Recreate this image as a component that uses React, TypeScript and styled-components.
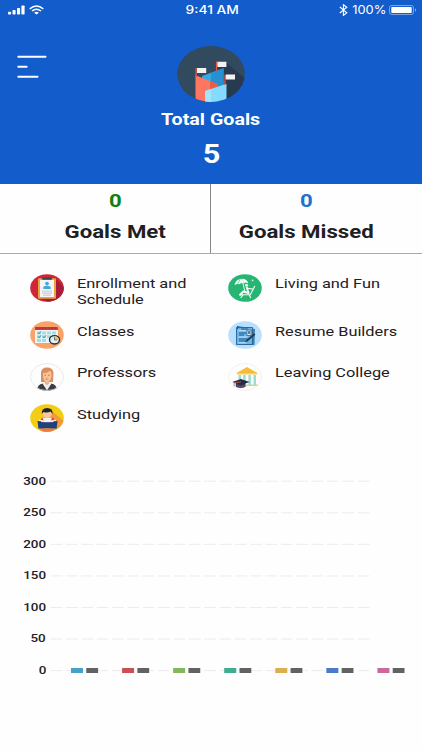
import React from "react";
import styled, { createGlobalStyle } from "styled-components";

const Global = createGlobalStyle`
  * { box-sizing: border-box; }
  html, body { margin: 0; background: #fefefe; }
  body { font-family: Roboto, "Liberation Sans", sans-serif; color: #1f2023; }
  svg { display: block; flex: none; }
`;

const Screen = styled.div`
  width: 422px;
  height: 750px;
  overflow: hidden;
  background: #fefefe;
  display: flex;
  flex-direction: column;
`;

/* Wide lettering: glyphs are stretched horizontally from the given edge. */
const Wide = styled.span<{ $size: number; $weight?: number; $stretch?: number; $origin?: string; $color?: string; $line?: number }>`
  display: block;
  white-space: pre;
  font-size: ${(p) => p.$size}px;
  font-weight: ${(p) => p.$weight ?? 400};
  line-height: ${(p) => (p.$line ? `${p.$line}px` : "1.2")};
  color: ${(p) => p.$color ?? "inherit"};
  transform: scaleX(${(p) => p.$stretch ?? 1.2});
  transform-origin: ${(p) => p.$origin ?? "center"} center;
`;

const Header = styled.header`
  height: 184px;
  flex: none;
  background: #135ccb;
  color: #fff;
`;

const StatusBar = styled.div`
  height: 20px;
  display: grid;
  grid-template-columns: 1fr auto 1fr;
  align-items: center;
  padding: 0 5px 0 8px;
`;

const StatusText = styled(Wide)`
  font-family: Inter, Roboto, sans-serif;
  padding-top: 2px;
`;

const StatusSide = styled.div<{ $end?: boolean }>`
  display: flex;
  align-items: center;
  justify-content: ${(p) => (p.$end ? "flex-end" : "flex-start")};
  gap: 4px;
`;

const HeaderBody = styled.div`
  display: grid;
  grid-template-columns: 62px 1fr 62px;
  padding-top: 26px;
`;

const MenuButton = styled.button`
  border: 0;
  background: none;
  padding: 9px 0 0 17px;
  align-self: start;
`;

const Total = styled.div`
  display: flex;
  flex-direction: column;
  align-items: center;
`;

const TotalLabel = styled(Wide)`
  margin-top: 8px;
`;

const TotalValue = styled(Wide)`
  margin-top: 8px;
`;

const Stats = styled.section`
  height: 70px;
  flex: none;
  display: flex;
  border-bottom: 1px solid #aaa;
`;

const Stat = styled.div<{ $width: number; $left?: number; $right?: number }>`
  width: ${(p) => p.$width}px;
  padding: 6px ${(p) => p.$right ?? 0}px 0 ${(p) => p.$left ?? 0}px;
  display: flex;
  flex-direction: column;
  align-items: center;
  gap: 7px;
  & + & { border-left: 1px solid #858585; }
`;

const Categories = styled.section`
  flex: none;
  display: grid;
  grid-template-columns: 198px 1fr;
  grid-template-rows: 34px 28px 28px 28px;
  row-gap: 13.5px;
  padding: 19.5px 0 0 29.5px;
`;

const Category = styled.div`
  display: flex;
  align-items: flex-start;
  gap: 13.5px;
`;

const CategoryName = styled(Wide)`
  margin-top: 1.5px;
`;

const ChartArea = styled.section`
  display: flex;
  flex: none;
  margin-top: 39.5px;
`;

const Axis = styled.div`
  width: 46px;
  display: flex;
  flex-direction: column;
  align-items: flex-end;
  gap: 17.57px;
  padding-top: 3px;
`;

const Medal = ({ bg, ring, children }: { bg: string; ring?: string; children: React.ReactNode }) => {
  const id = React.useId();
  return (
    <svg width="34" height="28" viewBox="0 0 34 28">
      <defs>
        <clipPath id={id}><ellipse cx="17" cy="14" rx="16.8" ry="13.8" /></clipPath>
      </defs>
      <g clipPath={`url(#${id})`}>
        <rect width="34" height="28" fill={bg} />
        {children}
      </g>
      {ring && <ellipse cx="17" cy="14" rx="16.5" ry="13.5" fill="none" stroke={ring} strokeWidth=".7" />}
    </svg>
  );
};

const EnrollmentIcon = () => (
  <Medal bg="#cf2637">
    <path d="M25 4 34 13v15H18l-8-4z" fill="#a91c36" />
    <rect x="8" y="4.3" width="18" height="20.5" rx="1" fill="#eda33b" />
    <rect x="10" y="6" width="14" height="17" fill="#f4f6fa" />
    <rect x="12" y="3.6" width="10" height="2.2" rx="1" fill="#46424f" />
    <circle cx="17" cy="9.6" r="1.9" fill="#45a8d6" />
    <path d="M13.3 15v-1.5q0-1.7 3.7-1.7t3.7 1.7V15z" fill="#45a8d6" />
    <path d="M12 17.2h10M12 19.2h10M13 21.2h8" stroke="#b5bcc9" strokeWidth=".8" />
  </Medal>
);

const ClassesIcon = () => (
  <Medal bg="#fba268">
    <rect x="5" y="6.5" width="23" height="15.5" fill="#f0f7f7" />
    <rect x="5" y="6" width="23" height="3" fill="#d43c40" />
    <path d="M7 6v2M10 6v2M13 6v2M16 6v2M19 6v2M22 6v2M25 6v2" stroke="#8d292f" strokeWidth=".8" />
    <g fill="#a7dbe0">
      <rect x="7" y="10.5" width="4" height="3" /><rect x="12" y="10.5" width="4" height="3" /><rect x="17" y="10.5" width="4" height="3" /><rect x="22" y="10.5" width="4" height="3" />
      <rect x="7" y="14.3" width="4" height="3" /><rect x="12" y="14.3" width="4" height="3" /><rect x="17" y="14.3" width="4" height="3" />
      <rect x="7" y="18" width="4" height="3" /><rect x="12" y="18" width="4" height="3" />
    </g>
    <path d="m8 11.5 1 1.3 2-2.5M13 15.5l1 1.3 2-2.5M8 15.5l1 1.3 2-2.5" fill="none" stroke="#267d91" strokeWidth=".8" />
    <ellipse cx="24.5" cy="18.8" rx="5" ry="4.2" fill="#e1eff7" stroke="#272b3f" strokeWidth="1.4" />
    <path d="M24.5 18.8V15.3a4 3.5 0 0 1 4 3.5z" fill="#e6cf58" />
    <path d="M24.5 16v3h2.7" fill="none" stroke="#272b3f" strokeWidth=".6" />
  </Medal>
);

const ProfessorsIcon = () => (
  <Medal bg="#fdfdfd" ring="#e2e2e6">
    <path d="M11 19V10q0-5.5 6-5.5T23.5 10l-.5 9z" fill="#d98f5b" />
    <path d="M7 28q0-7 6-7.5h8q6 .5 6 7.5z" fill="#3a3c42" />
    <path d="m12.5 20.5 4.5 7 4.5-7-2-1h-5z" fill="#edf0f2" />
    <path d="M15 17h4v3.5l-2 1.7-2-1.7z" fill="#eeb285" />
    <path d="M13 10q5 0 7-2.5 1.5 1.5 1.5 5 0 5.5-4.5 6.5-4-1-4-6z" fill="#f8c39b" />
    <path d="M14.8 12.2h1M18.5 12.2h1" stroke="#65422e" strokeWidth=".8" />
    <path d="M15.7 16h2.6" stroke="#d0534d" strokeWidth=".7" />
  </Medal>
);

const StudyingIcon = () => (
  <Medal bg="#f2cc15">
    <path d="m23 8 12 10v12H11l-2-6z" fill="#f29a3a" />
    <path d="M10 19q0-5 4-6h7q4.5 1 4.5 6z" fill="#df4545" />
    <path d="M12.5 13.5h9.5l-1.5 4h-6.5z" fill="#f7f1e6" />
    <ellipse cx="17.3" cy="10" rx="4.4" ry="4" fill="#f9c8a1" />
    <path d="M11.8 10q-.5-6 5.3-6 6.2 0 5.4 6l-2-2.4q-3 1.6-7.2.4z" fill="#25222b" />
    <path d="m9 15.6 8.2 1.4L26 15.6v2l-8.8 1.4L9 17.6z" fill="#f6efe7" />
    <path d="m7.5 17 3.2.2 1 1.1h11.2l1-1.1 3.6-.2-.8 7.4H8.4z" fill="#1f417f" />
    <path d="M12 25q5-1.5 11 0v3H12z" fill="#e97c3b" />
  </Medal>
);

const LivingIcon = () => (
  <Medal bg="#27b573">
    <path d="M6.5 11Q7.5 5 14 4.7q5 .2 6.2 4.5l-2.6-.6-2 .8-2-.4-2.5 1.3-2-.3z" fill="#f5fff7" />
    <path d="m9.7 10 2.5-5M15.2 9 14 5" stroke="#27b573" strokeWidth=".6" />
    <path d="M14 5.5 16.8 17" stroke="#f5fff7" strokeWidth=".9" />
    <circle cx="18.5" cy="11.3" r="1.5" fill="#f5fff7" />
    <path d="m18.7 13 1.8 6-5.2-1.5-3.8 4" fill="none" stroke="#f5fff7" strokeWidth="1.9" strokeLinejoin="round" />
    <path d="m26.8 12-4.5 8.8H13M15 21l-2.3 3M21 20.8l1.8 3.2M19.3 14.2l5.5.8" fill="none" stroke="#f5fff7" strokeWidth="1.1" />
    <circle cx="24.6" cy="6.3" r=".9" fill="#d9fbe5" />
  </Medal>
);

const ResumeIcon = () => (
  <Medal bg="#b9dfff">
    <path d="m10 5 17 3-.5 16H11z" fill="#3882bb" />
    <path d="M8.5 6.5h16v17h-16z" fill="#65b5ef" stroke="#2b608c" strokeWidth=".9" />
    <path d="M9.5 5v3M13.2 8h6.5M11 12h7M11 14h5M11 18h9M11 20h7" stroke="#245886" strokeWidth="1" />
    <path d="M10.5 9.7h8M10.5 16h9M10.5 21.8h8" stroke="#c8e7fb" strokeWidth="1" />
    <rect x="19" y="9" width="4" height="5.5" fill="#e1f1fd" stroke="#27527b" strokeWidth=".7" />
    <path d="M21 10v3" stroke="#27364d" strokeWidth="1.3" />
    <path d="m18.5 20 8.3-7" stroke="#26384e" strokeWidth="1.8" />
    <path d="m17.2 21.3 2-.7-1-1z" fill="#222" />
  </Medal>
);

const CollegeIcon = () => (
  <Medal bg="#fdfdfd" ring="#ece9f1">
    <path d="M8 10.3 19 4l11 6.3z" fill="#f4bd3c" />
    <path d="M9 10h20v1.5H9zM9 21.5h21V23H16z" fill="#f7cd55" />
    <path d="M10.5 12h2.5v8h-2.5zM15.2 12h2.5v9h-2.5zM20.4 12h2.5v10h-2.5zM25.5 12H28v10h-2.5z" fill="#9adfce" />
    <path d="M7.8 19v4.8q5 2.4 9.7 0V19z" fill="#37405d" />
    <path d="m4.2 18.9 8.7-2.8 8.8 2.8-8.8 3z" fill="#202c49" />
    <path d="m13 18.9-6.8.9v3.6" fill="none" stroke="#c95e51" strokeWidth=".8" />
    <path d="M9 22.9q4 1.6 7.5 0" fill="none" stroke="#a75155" strokeWidth=".7" />
  </Medal>
);

const GoalsIcon = () => (
  <svg width="68" height="56" viewBox="0 0 68 56">
    <defs><clipPath id="goals-disc"><ellipse cx="34" cy="28" rx="33.8" ry="28" /></clipPath></defs>
    <g clipPath="url(#goals-disc)">
      <rect width="68" height="56" fill="#324a5e" />
      <path d="m47 15 22 18v23H49V38L40 20z" fill="#273a50" />
      <path d="M25 30 46.5 22.2V47L34 50 25 38z" fill="#3aa7e5" />
      <path d="m34 27.2 12.5-5V47L34 48z" fill="#2690d0" />
      <path d="M18.5 29.2 40.5 38v18h-22z" fill="#fd7662" />
      <path d="m33 35 7.5 3v18H33z" fill="#e95c48" />
      <path d="m28 45 21.5-7.3V56H28z" fill="#84dbff" />
      <path d="m28 45 6-2v13h-6z" fill="#a4e4fb" />
      <path d="M19.1 22v9M39.5 15.5v9M48 28.8V39" stroke="#f1543f" strokeWidth="1.2" />
      <path d="M20 22h9.2v5H20zM40.4 15.7h9v5.2h-9zM48.7 28.6H58v5h-9.3z" fill="#f2f2f4" />
    </g>
  </svg>
);

const Signal = () => (
  <svg width="17" height="10" viewBox="0 0 17 10" fill="#fff">
    <rect y="6.8" width="3.1" height="2.7" rx=".7" /><rect x="4.5" y="5" width="3.1" height="4.5" rx=".7" />
    <rect x="9" y="3" width="3.1" height="6.5" rx=".7" /><rect x="13.4" y=".5" width="3.2" height="9" rx=".7" />
  </svg>
);

const Wifi = () => (
  <svg width="15" height="10" viewBox="0 0 15 10" fill="none" stroke="#fff" strokeWidth="1.5">
    <path d="M.7 3.8q6.8-5.5 13.6 0M3 6q4.5-3.6 9 0" /><path d="M5.1 7.7q2.4-1.8 4.8 0L7.5 9.6z" fill="#fff" stroke="none" />
  </svg>
);

const Bluetooth = () => (
  <svg width="9" height="12" viewBox="0 0 9 12" fill="none" stroke="#fff" strokeWidth="1.1">
    <path d="m.8 3 7 5.8-3.4 2.6V.7l3.4 2.5L.8 9" />
  </svg>
);

const Battery = () => (
  <svg width="28" height="10" viewBox="0 0 28 10">
    <rect x=".5" y=".5" width="24" height="9" rx="2.3" fill="none" stroke="#fff" strokeOpacity=".55" strokeWidth=".8" />
    <rect x="2.3" y="2" width="20.4" height="6" rx=".8" fill="#fff" />
    <path d="M26 3.3q2 1.7 0 3.4z" fill="#fff" fillOpacity=".6" />
  </svg>
);

const StatusIcons = styled(StatusSide)`
  gap: 5px;
  & > :first-child { margin-right: 1px; }
`;

const categories: [string, () => React.JSX.Element][] = [
  ["Enrollment and\nSchedule", EnrollmentIcon],
  ["Living and Fun", LivingIcon],
  ["Classes", ClassesIcon],
  ["Resume Builders", ResumeIcon],
  ["Professors", ProfessorsIcon],
  ["Leaving College", CollegeIcon],
  ["Studying", StudyingIcon],
];

const ticks = [300, 250, 200, 150, 100, 50, 0];
const barColors = ["#45a2c8", "#c74f55", "#82b75b", "#40ad91", "#dbaf4d", "#4b7ac8", "#c9699c"];

export default function App() {
  return (
    <>
      <Global />
      <Screen>
        <Header>
          <StatusBar>
            <StatusSide><Signal /><Wifi /></StatusSide>
            <StatusText $size={11.5} $weight={500} $stretch={1.2}>9:41 AM</StatusText>
            <StatusIcons $end>
              <Bluetooth />
              <StatusText $size={11.5} $stretch={1.12}>100%</StatusText>
              <Battery />
            </StatusIcons>
          </StatusBar>
          <HeaderBody>
            <MenuButton aria-label="Menu">
              <svg width="30" height="24" viewBox="0 0 30 24" stroke="#fff" strokeWidth="2" strokeLinecap="round">
                <path d="M1.3 1.7h27.2M1.3 11.7h8.3M1.3 21.7h19.2" />
              </svg>
            </MenuButton>
            <Total>
              <GoalsIcon />
              <TotalLabel $size={16.5} $weight={700} $line={20} $stretch={1.19}>Total Goals</TotalLabel>
              <TotalValue $size={26} $weight={700} $line={32} $stretch={1.18}>5</TotalValue>
            </Total>
          </HeaderBody>
        </Header>
        <Stats>
          <Stat $width={210} $left={21}>
            <Wide $size={18.5} $weight={700} $line={22} $color="#118011">0</Wide>
            <Wide $size={18.5} $weight={700} $line={26}>Goals Met</Wide>
          </Stat>
          <Stat $width={212} $right={20}>
            <Wide $size={18.5} $weight={700} $line={22} $color="#2172cf">0</Wide>
            <Wide $size={18.5} $weight={700} $line={26}>Goals Missed</Wide>
          </Stat>
        </Stats>
        <Categories>
          {categories.map(([name, Icon]) => (
            <Category key={name}>
              <Icon />
              <CategoryName $size={13.5} $line={16} $stretch={1.21} $origin="left">{name}</CategoryName>
            </Category>
          ))}
        </Categories>
        <ChartArea>
          <Axis>
            {ticks.map((t) => (
              <Wide key={t} $size={11.2} $weight={500} $line={14} $origin="right">{t}</Wide>
            ))}
          </Axis>
          <svg width="376" height="206" viewBox="0 0 376 206">
            {ticks.map((t, i) => (
              <path key={t} d={`M4.7 ${9.2 + i * 31.57}H324.5`} stroke="#ececee" strokeWidth="1" strokeDasharray="11.7 3.65" />
            ))}
            {barColors.map((c, i) => (
              <g key={c} transform={`translate(${25 + i * 51.07} 196)`}>
                <rect width="12" height="5" fill={c} />
                <rect x="15.3" width="11.8" height="5" fill="#626264" />
              </g>
            ))}
          </svg>
        </ChartArea>
      </Screen>
    </>
  );
}
